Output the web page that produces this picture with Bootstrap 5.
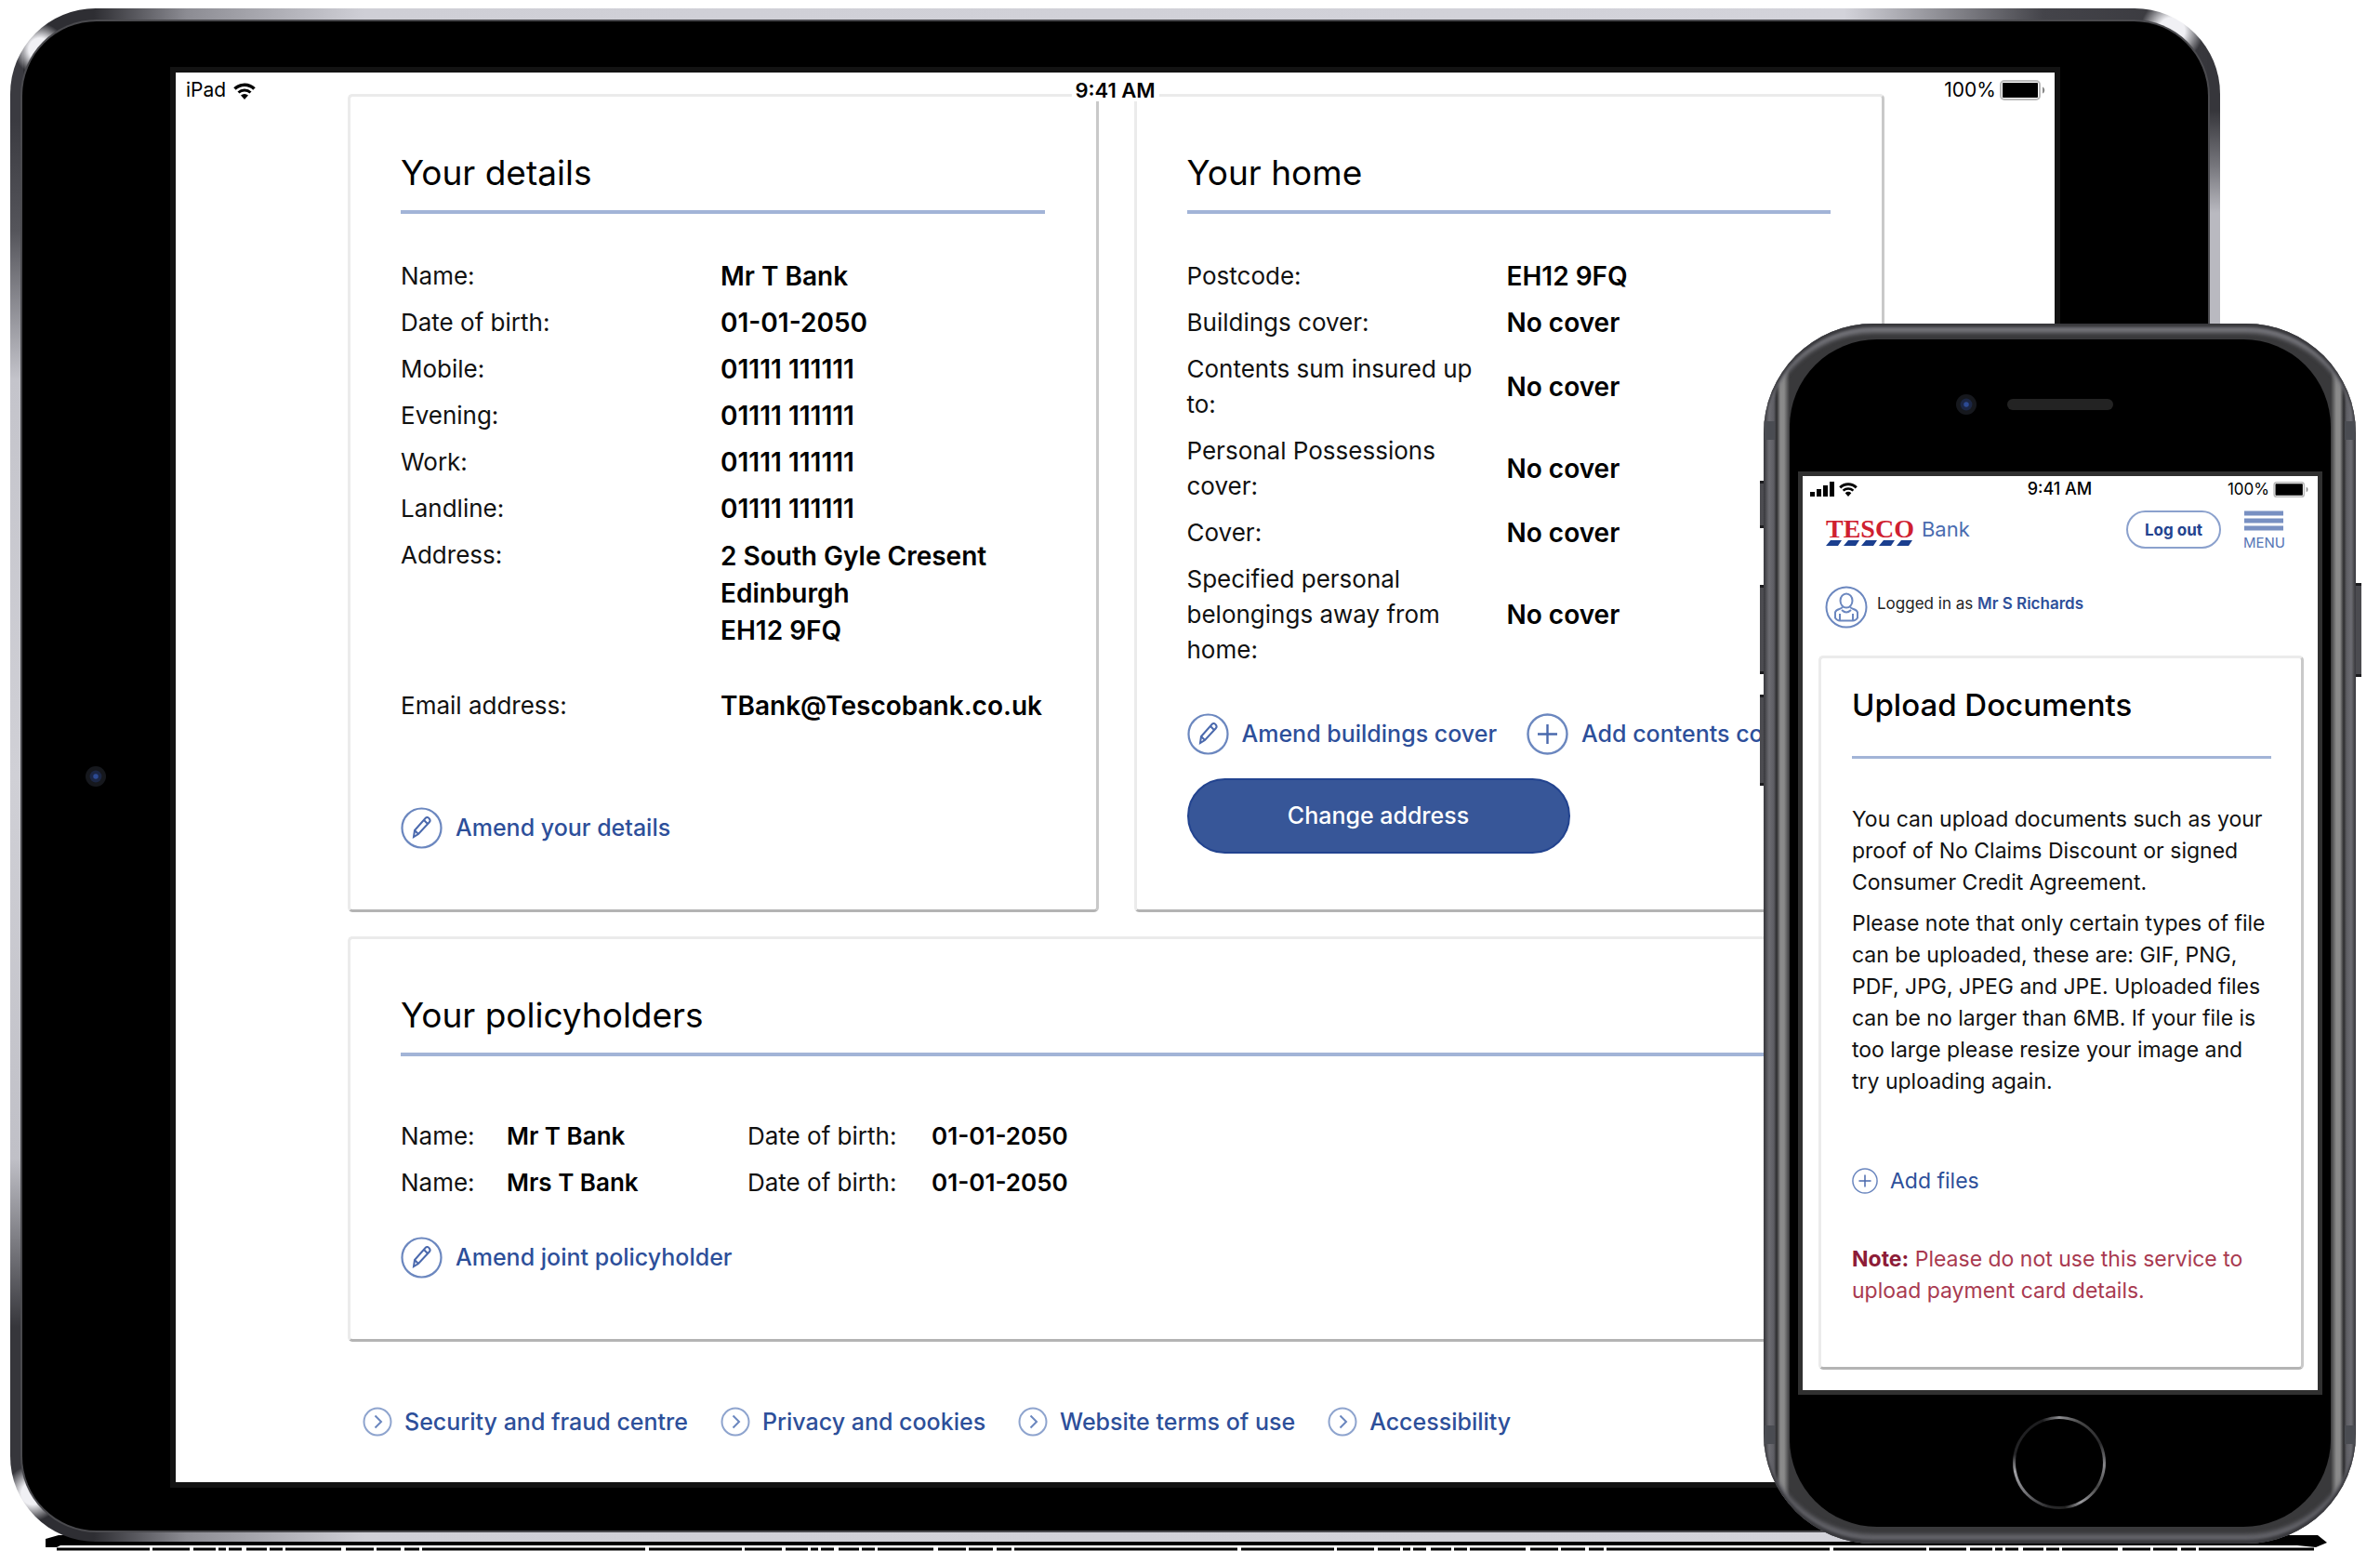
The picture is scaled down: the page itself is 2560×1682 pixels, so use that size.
<!DOCTYPE html>
<html lang="en">
<head>
<meta charset="utf-8">
<meta name="viewport" content="width=device-width, initial-scale=1">
<title>Tesco Bank – Your policy</title>
<link href="https://cdn.jsdelivr.net/npm/bootstrap@5.3.0/dist/css/bootstrap.min.css" rel="stylesheet">
<style>
  :root { --ink:#111; --blue:#2d4f9a; --rule:#a2b4d7; }
  body { font-family:Inter,"Liberation Sans",sans-serif; color:#000; background:#fff; font-size:26px; line-height:38px; }
  a { color:var(--blue); text-decoration:none; font-weight:500; }
  svg { display:block; flex:none; }
  .stage { padding:9px 172px 12px 11px; }

  /* tablet */
  .tablet { z-index:1; padding:14px 13px 12px; border-radius:92px;
    background:
      radial-gradient(circle at 32px 44px,#f0f0f4 0 12px,transparent 28px),
      radial-gradient(circle at calc(100% - 52px) 24px,#f0f0f4 0 14px,transparent 34px),
      radial-gradient(circle at 24px calc(100% - 52px),#f0f0f4 0 12px,transparent 30px),
      linear-gradient(#3a3a40 0 120px,#55555b 240px,#c4c4cb 400px,#d0d0d6 50%,#c0c0c7 75%,#36363b 86%) left/14px 100% no-repeat,
      linear-gradient(#36363b 0 110px,#77777d 170px,#b9b9c0 220px,#b9b9c0) right/14px 100% no-repeat,
      linear-gradient(90deg,#2e2e33 0 90px,#8c8c93 190px,#cfcfd6 380px,#d3d3da 83%,#44444a 92%,#36363b); }
  .tablet-glass { border-radius:80px; background:#000; box-shadow:0 0 0 2px #4a4a4e; padding:49px 159px 46px; }
  .tablet-screen { border:6px solid #131313; }
  .tablet-view { background:#fff; padding:23px 183px 49px 185px; }
  .tablet-cam { left:68px; top:801px; }
  .tablet-bar { top:0; left:0; right:0; height:38px; padding:0 9px 0 11px; font-size:21px; line-height:38px; z-index:2; }
  .tablet-bar .clock { left:50%; transform:translateX(-50%); font-size:22px; font-weight:600; background:#fff; line-height:24px; padding:0 4px; margin-top:7px; }

  .panel { background:#fff; border:3px solid; border-color:#ebebeb #c9c9c9 #b4b4b4 #ebebeb; border-radius:5px; }
  .panel-wide { padding:60px 55px 60px 54px; }
  .panel-title { font-size:37px; line-height:44px; font-weight:400; margin:0; padding-bottom:18px; border-bottom:4px solid var(--rule); }
  .pair-row { --bs-gutter-x:38px; margin-bottom:26px; }
  .facts { margin:48px 0 0; }
  .fact { margin-bottom:12px; }
  .fact dt, .holder dt { font-weight:400; color:var(--ink); }
  .fact dt { width:344px; padding-right:28px; flex:none; }
  .fact dd { font-size:28px; font-weight:600; margin:0; }
  .fact address { line-height:40px; margin:0 0 30px; }
  .act { display:inline-flex; vertical-align:top; align-items:center; gap:14px; font-size:25px; line-height:45px; white-space:nowrap; }
  .act-details { margin-top:78px; }
  .act-home { margin-top:49px; gap:32px; }
  .act-holder { margin:27px 0 5px; }
  .btn-pill { display:block; background:#375698; border:2px solid #22438f; color:#fff; border-radius:42px; width:412px; height:81px; font-size:25px; font-weight:500; margin-top:25px; }
  .btn-pill:hover { background:#22438f; color:#fff; }
  .holders { margin-top:67px; }
  .holder { margin:0 0 12px; }
  .holder dd { font-size:26px; font-weight:600; margin:0; }
  .holder .h-name { width:114px; } .holder .h-who { width:259px; } .holder .h-dob { width:198px; }
  .foot { padding:70px 0 0 16px; gap:35px; font-size:25px; line-height:32px; }
  .foot a { display:inline-flex; gap:13px; white-space:nowrap; }

  /* surface the devices stand on */
  .ground { margin:-7px -115px 0 38px; height:17px; }

  /* phone */
  .phone { z-index:3; top:348px; right:26px; width:637px; }
  .phone-body { position:relative; border-radius:118px; padding:17px 27px 18px 28px; background:#6b6b70;
    background:linear-gradient(90deg,#39393d 0,#6c6c72 6px,#5d5d63 11px,#2c2c2e 14px,#8a8a8a 18px,#8a8a8a 22px,#39393b 28px,#39393b calc(100% - 27px),#8a8a8a calc(100% - 21px),#8a8a8a calc(100% - 17px),#2c2c2e calc(100% - 13px),#5d5d63 calc(100% - 10px),#6c6c72 calc(100% - 5px),#39393d);
    box-shadow:inset 0 4px 3px #38383c, inset 0 -4px 3px #38383c, inset 0 12px 4px -2px #74747a, inset 0 -12px 4px -2px #64646a; }
  .phone-glass { background:#000; border-radius:94px; padding:142px 9px; position:relative; }
  .phone-screen { border:5px solid #303030; }
  .phone-view { background:#fff; padding-bottom:22px; }
  .phone-key { width:6px; background:#4b4b50; border:solid #1d1d20; border-width:3px 0; }
  .kl { left:-4px; } .kr { right:-6px; }
  .k1 { top:169px; height:51px; } .k2 { top:281px; height:96px; } .k3 { top:399px; height:98px; } .k4 { top:279px; height:101px; }
  .band { width:11px; height:20px; background:#4a4c52; }
  .band-t { top:105px; } .band-b { bottom:107px; }
  .band-l { left:1px; } .band-r { right:1px; }
  .phone-cam { left:179px; top:59px; }
  .phone-ear { left:234px; top:64px; width:114px; height:12px; border-radius:6px; background:#232323; }
  .phone-home { left:50%; margin-left:-51px; bottom:19px; width:100px; height:100px; border-radius:50px; padding:0; border:0;
    background:conic-gradient(#8e8e92,#444 8%,#2a2a2c 18%,#88888c 26%,#444 34%,#99999d 42%,#222 48%,#2a2a2c 54%,#77777b 64%,#a0a0a4 72%,#242426 78%,#1c1c1e 94%,#8e8e92); }
  .phone-home span { display:block; margin:3px; height:94px; border-radius:47px; background:#000; }
  .phone-bar { height:28px; padding:0 9px 0 8px; font-size:17px; line-height:28px; }
  .phone-bar > * { flex:1 1 0; }
  .phone-bar .clock { font-size:18px; font-weight:500; }
  .phone-head { padding:9px 36px 0 25px; }
  .brand { gap:8px; }
  .brand-name { font:700 28px/24px "Liberation Serif",serif; color:#cf2030; }
  .brand-sub { font-size:22px; line-height:24px; font-weight:400; color:#4a6cb0; }
  .btn-out { border:2px solid #8ba1cd; border-radius:21px; width:102px; height:41px; padding:0; font-size:17px; line-height:20px; font-weight:700; color:#23438f; }
  .btn-menu { border:0; background:none; padding:0; color:#5675b5; font-size:15px; line-height:16px; width:44px; }
  .who { padding:38px 0 0 24px; font-size:17px; gap:10px; line-height:38px; color:#222; }
  .who a { font-weight:600; }
  .panel-slim { margin:29px 15px 0 17px; padding:30px 32px 65px 33px; font-size:23px; line-height:34px; color:var(--ink); }
  .panel-slim .panel-title { font-size:33px; line-height:40px; font-weight:500; padding-bottom:35px; border-bottom-width:3px; margin-bottom:48px; color:#000; }
  .panel-slim p { margin-bottom:10px; }
  .add { display:flex; align-items:center; gap:13px; margin-top:73px; font-weight:400; }
  .panel-slim .warn { color:#a93a50; margin:50px 0 0; }
  .warn strong { color:#8d1c37; }
</style>
</head>
<body>
<svg width="0" height="0" class="position-absolute" aria-hidden="true">
  <symbol id="i-pen" viewBox="0 0 45 45"><circle cx="22.500" cy="22.500" r="21" fill="none" stroke="#6b87bf" stroke-width="2.200"/><path d="M14 32l1-7L27 11.500c2-2 6 2 4 4.500L19 29zM25 14l4.500 4.500M15 25l4 4" fill="none" stroke="#4a69ad" stroke-width="2"/></symbol>
  <symbol id="i-plus" viewBox="0 0 45 45"><circle cx="22.500" cy="22.500" r="21" fill="none" stroke="#6b87bf" stroke-width="2.400"/><path d="M12 22.500h21M22.500 12v21" stroke="#4a69ad" stroke-width="2.400"/></symbol>
  <symbol id="i-next" viewBox="0 0 32 32"><circle cx="16" cy="16" r="14.500" fill="none" stroke="#8ea4ce" stroke-width="2"/><path d="M13.500 9.500L20 16l-6.500 6.500" fill="none" stroke="#6b87bf" stroke-width="2"/></symbol>
  <symbol id="i-wifi" viewBox="0 0 24 19"><path d="M1.500 7.500a15 15 0 0 1 21 0" fill="none" stroke="#000" stroke-width="3.600"/><path d="M5.500 11.500a9.500 9.500 0 0 1 13 0" fill="none" stroke="#000" stroke-width="3"/><path d="M8 14.500a6 6 0 0 1 8 0L12 19z"/></symbol>
  <symbol id="i-batt" viewBox="0 0 50 22"><rect x="1" y="1" width="42" height="20" rx="4" fill="#fff" stroke="#bbb" stroke-width="2"/><rect x="3" y="3" width="38" height="16" rx="1"/><path d="M46 7.500c3 1 3 6 0 7z" fill="#888"/></symbol>
  <symbol id="i-cam" viewBox="0 0 24 24"><circle cx="12" cy="12" r="12" fill="#16181d"/><circle cx="12" cy="12" r="7" fill="#1b2644"/><circle cx="12" cy="12" r="3" fill="#2c4a94"/></symbol>
</svg>

<div class="stage position-relative">
  <main class="tablet position-relative">
    <div class="tablet-glass position-relative">
      <svg class="tablet-cam position-absolute" width="22" height="22"><use href="#i-cam"/></svg>
      <div class="tablet-screen">
        <div class="tablet-view position-relative">
          <div class="tablet-bar position-absolute d-flex justify-content-between align-items-center">
            <span class="d-flex align-items-center gap-2">iPad <svg width="24" height="19"><use href="#i-wifi"/></svg></span>
            <span class="clock position-absolute top-0">9:41 AM</span>
            <span class="d-flex align-items-center gap-1">100% <svg width="50" height="22"><use href="#i-batt"/></svg></span>
          </div>

          <div class="row pair-row">
            <div class="col-6">
              <section class="panel panel-wide h-100">
                <h2 class="panel-title">Your details</h2>
                <dl class="facts">
                  <div class="fact d-flex"><dt>Name:</dt><dd>Mr T Bank</dd></div>
                  <div class="fact d-flex"><dt>Date of birth:</dt><dd>01-01-2050</dd></div>
                  <div class="fact d-flex"><dt>Mobile:</dt><dd>01111 111111</dd></div>
                  <div class="fact d-flex"><dt>Evening:</dt><dd>01111 111111</dd></div>
                  <div class="fact d-flex"><dt>Work:</dt><dd>01111 111111</dd></div>
                  <div class="fact d-flex"><dt>Landline:</dt><dd>01111 111111</dd></div>
                  <div class="fact d-flex"><dt>Address:</dt><dd><address>2 South Gyle Cresent<br>Edinburgh<br>EH12 9FQ</address></dd></div>
                  <div class="fact d-flex"><dt>Email address:</dt><dd>TBank@Tescobank.co.uk</dd></div>
                </dl>
                <a href="#" class="act act-details"><svg width="45" height="45"><use href="#i-pen"/></svg>Amend your details</a>
              </section>
            </div>
            <div class="col-6">
              <section class="panel panel-wide h-100">
                <h2 class="panel-title">Your home</h2>
                <dl class="facts">
                  <div class="fact d-flex align-items-center"><dt>Postcode:</dt><dd>EH12 9FQ</dd></div>
                  <div class="fact d-flex align-items-center"><dt>Buildings cover:</dt><dd>No cover</dd></div>
                  <div class="fact d-flex align-items-center"><dt>Contents sum insured up to:</dt><dd>No cover</dd></div>
                  <div class="fact d-flex align-items-center"><dt>Personal Possessions cover:</dt><dd>No cover</dd></div>
                  <div class="fact d-flex align-items-center"><dt>Cover:</dt><dd>No cover</dd></div>
                  <div class="fact d-flex align-items-center"><dt>Specified personal belongings away from home:</dt><dd>No cover</dd></div>
                </dl>
                <div class="act-home d-flex">
                  <a href="#" class="act"><svg width="45" height="45"><use href="#i-pen"/></svg>Amend buildings cover</a>
                  <a href="#" class="act"><svg width="45" height="45"><use href="#i-plus"/></svg>Add contents cover</a>
                </div>
                <button type="button" class="btn btn-pill">Change address</button>
              </section>
            </div>
          </div>

          <section class="panel panel-wide">
            <h2 class="panel-title">Your policyholders</h2>
            <div class="holders">
              <dl class="holder d-flex"><dt class="h-name">Name:</dt><dd class="h-who">Mr T Bank</dd><dt class="h-dob">Date of birth:</dt><dd>01-01-2050</dd></dl>
              <dl class="holder d-flex"><dt class="h-name">Name:</dt><dd class="h-who">Mrs T Bank</dd><dt class="h-dob">Date of birth:</dt><dd>01-01-2050</dd></dl>
            </div>
            <a href="#" class="act act-holder"><svg width="45" height="45"><use href="#i-pen"/></svg>Amend joint policyholder</a>
          </section>

          <nav class="foot d-flex" aria-label="Site links">
            <a href="#"><svg width="32" height="32"><use href="#i-next"/></svg>Security and fraud centre</a>
            <a href="#"><svg width="32" height="32"><use href="#i-next"/></svg>Privacy and cookies</a>
            <a href="#"><svg width="32" height="32"><use href="#i-next"/></svg>Website terms of use</a>
            <a href="#"><svg width="32" height="32"><use href="#i-next"/></svg>Accessibility</a>
          </nav>
        </div>
      </div>
    </div>
  </main>

  <div class="ground" aria-hidden="true">
    <svg width="100%" height="17" viewBox="0 0 2454 17" preserveAspectRatio="none">
      <path d="M0 4L14 0H2444l10 8-12 5-20-2H16l-4 2H0z"/>
      <path d="M12 15H2440" stroke="#000" stroke-width="3" stroke-dasharray="100 3 40 4 24 3 8 3 14 5 22 3 14 3 60 5 30 3 26 4 16 3 240 4"/>
    </svg>
  </div>

  <aside class="phone position-absolute">
    <div class="phone-key position-absolute kl k1"></div>
    <div class="phone-key position-absolute kl k2"></div>
    <div class="phone-key position-absolute kl k3"></div>
    <div class="phone-key position-absolute kr k4"></div>
    <div class="phone-body">
      <div class="band position-absolute band-t band-l"></div><div class="band position-absolute band-t band-r"></div>
      <div class="band position-absolute band-b band-l"></div><div class="band position-absolute band-b band-r"></div>
      <div class="phone-glass">
        <svg class="phone-cam position-absolute" width="22" height="22"><use href="#i-cam"/></svg>
        <div class="phone-ear position-absolute"></div>
        <div class="phone-screen">
          <div class="phone-view">
            <div class="phone-bar d-flex align-items-center">
              <span class="d-flex align-items-center gap-1">
                <svg width="27" height="16" viewBox="0 0 27 16"><path d="M0 11h5v5H0zM7 8h5v8H7zM14 4h5v12h-5zM21 0h5v16h-5z"/></svg>
                <svg width="20" height="16" viewBox="0 0 24 19"><use href="#i-wifi"/></svg>
              </span>
              <span class="clock text-center">9:41 AM</span>
              <span class="d-flex align-items-center justify-content-end gap-1">100% <svg width="39" height="17" viewBox="0 0 50 22"><use href="#i-batt"/></svg></span>
            </div>

            <header class="phone-head d-flex align-items-start">
              <a href="#" class="brand d-flex mt-2 me-auto">
                <span><span class="brand-name d-block">TESCO</span>
                  <svg width="94" height="7" viewBox="0 0 94 7"><path d="M5 0h12l-4 6H0zM24 0h12l-4 6H19zM43 0h12l-4 6H38zM62 0h12l-4 6H57zM81 0h12l-4 6H76z" fill="#1b3f8f"/></svg></span>
                <span class="brand-sub">Bank</span>
              </a>
              <button type="button" class="btn btn-out me-4">Log out</button>
              <button type="button" class="btn-menu"><svg width="44" height="27" viewBox="0 0 44 27"><path d="M1 3h42M1 11h42M1 19h42" stroke="#7890c2" stroke-width="5"/></svg>MENU</button>
            </header>

            <div class="who d-flex">
              <svg width="46" height="46" viewBox="0 0 46 46" fill="none" stroke="#6b87bf" stroke-width="2"><circle cx="23" cy="23" r="21.500"/><ellipse cx="23" cy="16" rx="6.500" ry="7.500"/><path d="M19 22.500c-1 3-7 2-8 6v6q2 3 5 3h14q3 0 5-3v-6c-1-4-7-3-8-6M16 30v7M30 30v7M18 26q5 5 10 0"/></svg>
              <span>Logged in as <a href="#">Mr S Richards</a></span>
            </div>

            <section class="panel panel-slim">
              <h2 class="panel-title">Upload Documents</h2>
              <p>You can upload documents such as your proof of No Claims Discount or signed Consumer Credit Agreement.</p>
              <p>Please note that only certain types of file can be uploaded, these are: GIF, PNG, PDF, JPG, JPEG and JPE. Uploaded files can be no larger than 6MB. If your file is too large please resize your image and try uploading again.</p>
              <a href="#" class="add"><svg width="28" height="28"><use href="#i-plus"/></svg>Add files</a>
              <p class="warn"><strong>Note:</strong> Please do not use this service to upload payment card details.</p>
            </section>
          </div>
        </div>
        <button type="button" class="phone-home position-absolute" aria-label="Home"><span></span></button>
      </div>
    </div>
  </aside>
</div>
<script src="https://cdn.jsdelivr.net/npm/bootstrap@5.3.0/dist/js/bootstrap.bundle.min.js"></script>
</body>
</html>
